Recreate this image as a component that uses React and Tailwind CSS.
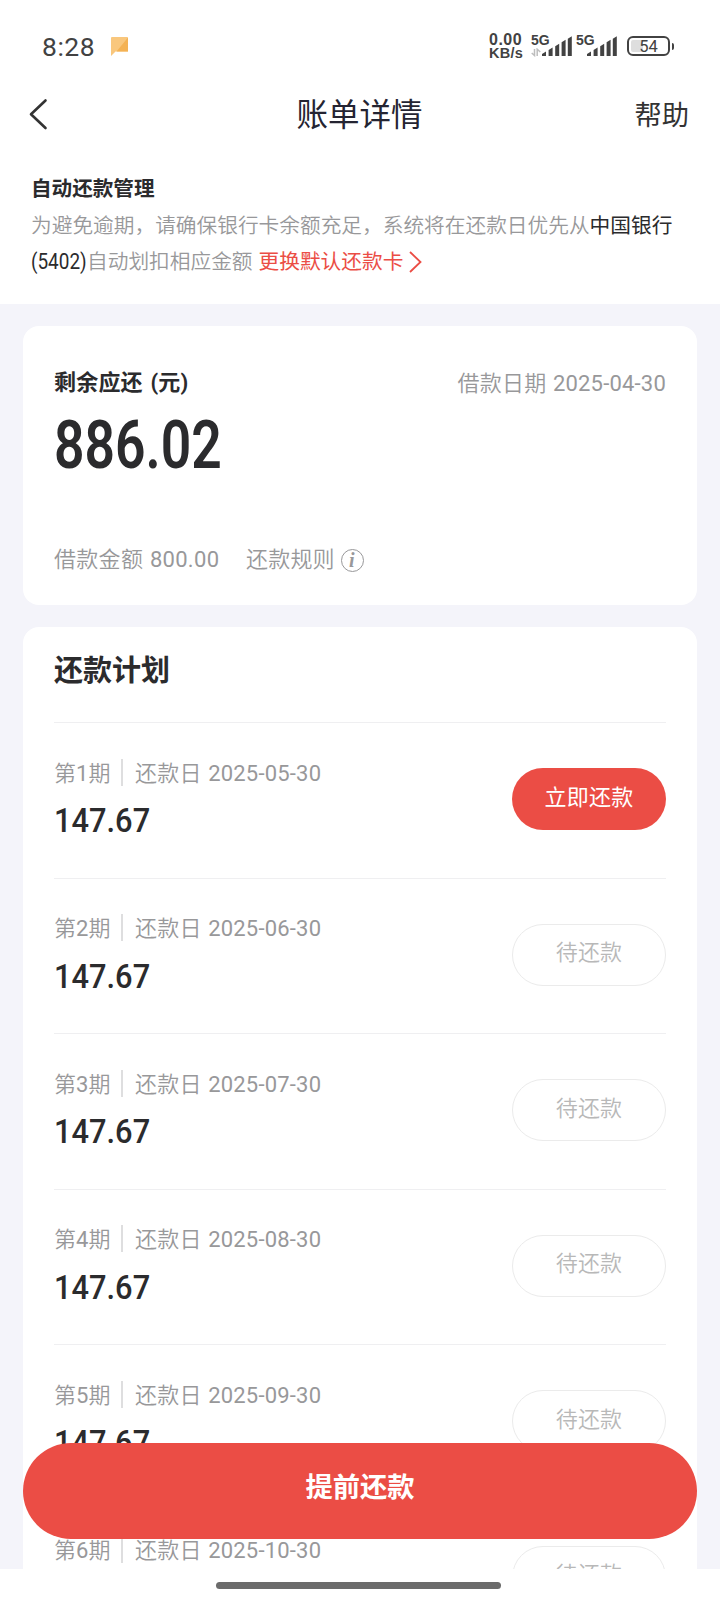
import React from 'react';

const plan = [
  { no: 1, date: '2025-05-30', due: true },
  { no: 2, date: '2025-06-30' },
  { no: 3, date: '2025-07-30' },
  { no: 4, date: '2025-08-30' },
  { no: 5, date: '2025-09-30' },
  { no: 6, date: '2025-10-30' },
];

function SignalBars() {
  return (
    <svg className="h-5 w-[30px]" viewBox="0 0 30 20" fill="#424242">
      <path d="M0 20V18L4 15.5V20ZM6.6 20V14L10.6 11.5V20ZM13.2 20V10.2L17.2 7.7V20ZM19.6 20V6.2L23.6 3.7V20ZM25.8 20V2.8L29.8.3V20Z" />
    </svg>
  );
}

function StatusBar() {
  return (
    <header className="flex h-[76px] items-start pl-[42px] pt-[30px] text-[#424242]">
      <span className="w-[69px] text-[26.5px] leading-[33px] tracking-[0.5px]">8:28</span>
      <svg className="mt-[7px] h-[20px] w-[17px]" viewBox="0 0 17 20">
        <path d="M1 0H16Q17 0 17 1V14.5H4.5L0 19V1Q0 0 1 0Z" fill="#f9c77d" />
        <path d="M17 .5V14.5H5.5Z" fill="#f4b254" />
      </svg>
      <div className="ml-[361px] mt-[3px] w-[42px] font-['Liberation_Sans',sans-serif] font-bold">
        <div className="text-[16px] leading-[14px] tracking-[0.5px]">0.00</div>
        <div className="text-[14.5px] leading-[13px] tracking-[0.3px]">KB/s</div>
      </div>
      <div className="flex w-[45px] items-start pt-[4px]">
        <div className="w-[11px]">
          <div className="font-['Liberation_Sans',sans-serif] text-[14px] font-bold leading-3">5G</div>
          <svg className="mt-[2px] h-[9px] w-[10px]" viewBox="0 0 10 9" fill="none" stroke="#bdbdbd" strokeWidth="1.5">
            <path d="M3.5 1V7.5L.7 5M6.2 8V1.2L9.3 4" />
          </svg>
        </div>
        <div className="pt-[2px]"><SignalBars /></div>
      </div>
      <div className="flex w-[51px] items-start pt-[4px]">
        <div className="w-[11px] font-['Liberation_Sans',sans-serif] text-[14px] font-bold leading-3">5G</div>
        <div className="pt-[2px]"><SignalBars /></div>
      </div>
      <div className="mt-[6px] flex items-center">
        <div className="flex h-5 w-[43px] items-center justify-center rounded-[6px] border-2 border-[#424242] bg-linear-to-r from-[#dedede] from-35% to-white to-35% bg-clip-content p-[2px] text-[16.5px] leading-4">
          <span className="pt-px">54</span>
        </div>
        <div className="ml-[2px] h-[7px] w-[2px] rounded-r-sm bg-[#424242]" />
      </div>
    </header>
  );
}

function PlanRow({ no, date, due }) {
  return (
    <li className="flex h-[155.5px] shrink-0 items-start justify-between border-t border-[#efeff1]">
      <div className="pt-[33px]">
        <div className="flex h-8 items-center whitespace-nowrap text-[22px] leading-8 text-[#98989a]">
          <span className="w-[67px] pt-[3px] font-[350]">第<span className="font-normal">{no}</span>期</span>
          <span className="h-[27px] w-[2px] bg-[#dededf]" />
          <span className="ml-3 pt-[3px] font-[350] tracking-[0.2px] [word-spacing:1px]">还款日 <span className="font-normal">{date}</span></span>
        </div>
        <div className="mt-[13px] flex h-10 items-center">
          <span className="inline-block origin-left scale-x-[0.92] text-[33.5px] font-[550] leading-10 text-[#2b2b2d]">147.67</span>
        </div>
      </div>
      <button
        className={
          due
            ? 'mt-[45px] flex h-[62px] w-[154px] items-center justify-center rounded-full bg-[#eb4d45] pb-[3px] text-[22px] leading-8 tracking-[0.2px] text-white'
            : 'mt-[45px] flex h-[62px] w-[154px] items-center justify-center rounded-full border border-[#ebebeb] pb-[3px] text-[22px] font-[350] leading-8 tracking-[0.2px] text-[#b8b8b8]'
        }
      >
        {due ? '立即还款' : '待还款'}
      </button>
    </li>
  );
}

export default function App() {
  return (
    <div className="relative flex h-[1600px] w-[720px] flex-col overflow-hidden bg-white font-[Roboto,'Noto_Sans_CJK_SC',sans-serif] text-[#2b2b2d]" lang="zh-CN">
      <StatusBar />

      <nav className="grid h-[76px] shrink-0 grid-cols-3 items-center pl-[29px] pr-[31px]">
        <svg className="h-[32px] w-[19px]" viewBox="0 0 19 32" fill="none" stroke="#333" strokeWidth="2.6" strokeLinecap="round" strokeLinejoin="round">
          <path d="M16.5 2.5L2 16.3L16.5 30" />
        </svg>
        <h1 className="pl-[1px] pt-[3px] text-center text-[31.5px] leading-10 text-[#242432]">账单详情</h1>
        <button className="pt-[3px] text-right text-[27.3px] leading-10 text-[#333]">帮助</button>
      </nav>

      <section className="h-[152px] shrink-0 whitespace-nowrap pl-[31px] pt-[19px] text-[20.7px] leading-[36.6px]">
        <h2 className="text-[20.6px] font-bold">自动还款管理</h2>
        <p className="font-[350] text-[#98989a]">
          为避免逾期，请确保银行卡余额充足，系统将在还款日优先从<span className="font-normal text-[#2b2b2d]">中国银行</span>
        </p>
        <p className="flex font-[350] text-[#98989a]">
          <span className="w-[56px] font-normal text-[#2b2b2d]"><span className="inline-block origin-left scale-x-[0.86] text-[22px]">(5402)</span></span>
          <span>自动划扣相应金额</span>
          <a className="ml-[6px] flex items-center font-normal text-[#eb4d45]">
            更换默认还款卡
            <svg className="ml-[6px] h-[22px] w-[13px]" viewBox="0 0 13 22" fill="none" stroke="#eb4d45" strokeWidth="1.8">
              <path d="M1 1L11.5 11L1 21" />
            </svg>
          </a>
        </p>
      </section>

      <main className="flex h-[1265px] shrink-0 flex-col gap-[22px] overflow-hidden bg-[#f4f4fa] px-[23px] pt-[22px]">
        <section className="h-[279px] shrink-0 rounded-2xl bg-white px-[31px] pt-[41px]">
          <div className="flex h-8 items-center justify-between">
            <h2 className="text-[22px] font-bold leading-8 tracking-[0.2px] [word-spacing:2px]">剩余应还 (元)</h2>
            <span className="pt-[2px] text-[22px] font-[350] leading-8 tracking-[0.2px] text-[#98989a] [word-spacing:1px]">借款日期 <span className="font-normal">2025-04-30</span></span>
          </div>
          <div className="mt-[11px] flex h-[72px] items-center">
            <span className="inline-block origin-left scale-x-[0.81] text-[66px] font-semibold leading-[72px]">886.02</span>
          </div>
          <div className="mt-[62px] flex h-8 items-center text-[22px] font-[350] leading-8 text-[#98989a]">
            <span className="w-[192px] tracking-[0.3px] [word-spacing:1px]">借款金额 <span className="font-normal">800.00</span></span>
            <span className="tracking-[0.2px]">还款规则</span>
            <span className="ml-[6px] flex size-[23px] items-center justify-center rounded-full border-[1.5px] border-[#98989a] pr-px font-['Liberation_Serif',serif] text-[20px] font-bold italic leading-5">i</span>
          </div>
        </section>

        <section className="flex h-[1100px] shrink-0 flex-col rounded-2xl bg-white px-[31px]">
          <h2 className="h-[95px] shrink-0 pt-[24px] text-[29px] font-bold leading-10">还款计划</h2>
          <ul className="flex flex-col">
            {plan.map((row) => (
              <PlanRow key={row.no} {...row} />
            ))}
          </ul>
        </section>
      </main>

      <footer className="flex h-[31px] shrink-0 items-start bg-white pl-[215.5px] pt-[13px]">
        <div className="h-[7px] w-[285px] rounded-full bg-[#6b6b6b]" />
      </footer>

      <button className="absolute bottom-[61px] left-[23px] flex h-[96px] w-[674px] items-center justify-center rounded-full bg-[#eb4d45] pb-[7px] text-[27.3px] font-bold leading-10 text-white">
        提前还款
      </button>
    </div>
  );
}
